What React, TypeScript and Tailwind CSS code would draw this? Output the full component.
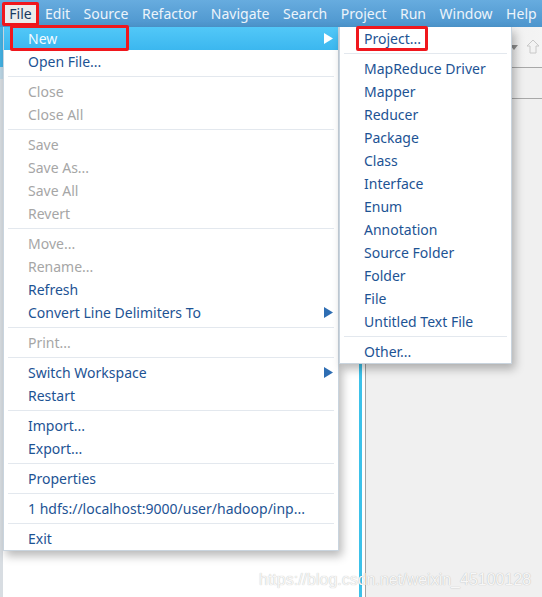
import * as React from "react"

type Item =
  | { kind: "sep" }
  | { kind: "item"; label: string; disabled?: boolean; submenu?: boolean; active?: boolean }

const FONT = { fontFamily: '"Noto Sans", "Open Sans", sans-serif' }

const MENU_BAR = ["Edit", "Source", "Refactor", "Navigate", "Search", "Project", "Run", "Window", "Help"]

const sep: Item = { kind: "sep" }
const it = (label: string, extra: Partial<Extract<Item, { kind: "item" }>> = {}): Item => ({
  kind: "item",
  label,
  ...extra,
})

const FILE_MENU: Item[] = [
  it("New", { submenu: true, active: true }),
  it("Open File..."),
  sep,
  it("Close", { disabled: true }),
  it("Close All", { disabled: true }),
  sep,
  it("Save", { disabled: true }),
  it("Save As...", { disabled: true }),
  it("Save All", { disabled: true }),
  it("Revert", { disabled: true }),
  sep,
  it("Move...", { disabled: true }),
  it("Rename...", { disabled: true }),
  it("Refresh"),
  it("Convert Line Delimiters To", { submenu: true }),
  sep,
  it("Print...", { disabled: true }),
  sep,
  it("Switch Workspace", { submenu: true }),
  it("Restart"),
  sep,
  it("Import..."),
  it("Export..."),
  sep,
  it("Properties"),
  sep,
  it("1 hdfs://localhost:9000/user/hadoop/inp..."),
  sep,
  it("Exit"),
]

const NEW_MENU: Item[] = [
  it("Project..."),
  sep,
  it("MapReduce Driver"),
  it("Mapper"),
  it("Reducer"),
  it("Package"),
  it("Class"),
  it("Interface"),
  it("Enum"),
  it("Annotation"),
  it("Source Folder"),
  it("Folder"),
  it("File"),
  it("Untitled Text File"),
  sep,
  it("Other..."),
]

function Arrow({ color }: { color: string }) {
  return (
    <svg width="9" height="11" viewBox="0 0 9 11" className="absolute right-[5px] top-[6px]">
      <path d="M0 0 L9 5.5 L0 11 Z" fill={color} />
    </svg>
  )
}

function MenuList({ items, textLeft }: { items: Item[]; textLeft: number }) {
  return (
    <div className="flex flex-col">
      {items.map((item, i) => {
        if (item.kind === "sep") {
          return (
            <div key={i} className="flex h-[7px] items-center px-[4px]">
              <div className="h-px w-full bg-[#e3e8ee]" />
            </div>
          )
        }
        return (
          <div
            key={i}
            className={`relative flex h-[23px] items-center text-[14px] ${
              item.active
                ? "bg-gradient-to-b from-[#52c8f8] to-[#3bb7ef] text-[#f4fbff]"
                : item.disabled
                  ? "text-[#a6a6a6]"
                  : "text-[#1d5394]"
            }`}
            style={{ paddingLeft: textLeft }}
          >
            <span className="whitespace-nowrap leading-none">{item.label}</span>
            {item.submenu ? <Arrow color={item.active ? "#ffffff" : "#2f6eb3"} /> : null}
          </div>
        )
      })}
    </div>
  )
}

export default function App() {
  return (
    <div className="relative flex h-[597px] w-[542px] flex-col overflow-hidden bg-white" style={FONT}>
      {/* Menu bar */}
      <div className="flex h-[27px] items-center bg-gradient-to-b from-[#67acdf] to-[#4c95cd] pl-[2px] text-[14px] text-[#edf4fb]">
        <div className="flex h-[24px] w-[37px] items-center justify-center rounded-[2px] border-[3px] border-[#f0171d] bg-[#ececec] text-[#173a62]">
          File
        </div>
        <div className="flex items-center gap-[13.5px] pl-[6px]">
          {MENU_BAR.map((m) => (
            <span key={m} className="whitespace-nowrap">
              {m}
            </span>
          ))}
        </div>
      </div>

      {/* Workbench behind the menus */}
      <div className="flex flex-1">
        <div className="flex w-[3px] flex-col bg-[#d8dde2]">
          <div className="h-[40px] bg-[#44b2e4]" />
          <div className="h-[12px] bg-[#bcd7e6]" />
        </div>
        <div className="w-[356px] bg-white" />
        <div className="w-[3px] bg-[#3cc1e9]" />
        <div className="w-[3px] bg-white" />
        <div className="w-px bg-[#a3a3a3]" />
        <div className="flex flex-1 flex-col bg-[#f0f0f0]">
          <div className="flex h-[40px] items-center justify-end gap-[8px] bg-gradient-to-r from-[#e4e4e4] to-[#f4f4f4] pr-[2px]">
            <svg width="8" height="5" viewBox="0 0 8 5">
              <path d="M0 0 H8 L4 5 Z" fill="#8d8d8d" />
            </svg>
            <svg width="14" height="18" viewBox="0 0 14 18">
              <path d="M7 2 L13 8 H10 V15 H4 V8 H1 Z" fill="none" stroke="#c8c8c8" strokeWidth="1" />
            </svg>
          </div>
          <div className="h-px bg-[#a8a8a8]" />
          <div className="h-[30px]" />
          <div className="h-px bg-[#a8a8a8]" />
        </div>
      </div>

      {/* File menu */}
      <div className="absolute left-[3px] top-[27px] w-[336px] border border-t-0 border-[#c9d4de] bg-white shadow-[3px_5px_9px_rgba(0,0,0,0.28)]">
        <MenuList items={FILE_MENU} textLeft={24} />
      </div>

      {/* New submenu */}
      <div className="absolute left-[339px] top-[27px] w-[173px] border border-t-0 border-[#c9d4de] bg-white shadow-[3px_5px_9px_rgba(0,0,0,0.28)]">
        <MenuList items={NEW_MENU} textLeft={24} />
      </div>

      {/* Highlight boxes */}
      <div className="absolute left-[10px] top-[25px] h-[26px] w-[119px] rounded-[2px] border-[3px] border-[#f0171d]" />
      <div className="absolute left-[356px] top-[26px] h-[25px] w-[72px] rounded-[2px] border-[3px] border-[#f0171d]" />

      {/* Watermark */}
      <div
        className="absolute left-[259px] top-[568px] whitespace-nowrap text-[16px] text-[#f7f7f7]"
        style={{ fontFamily: '"Liberation Sans", Arial, sans-serif', textShadow: "0 0 1px rgba(0,0,0,0.3)" }}
      >
        https://blog.csdn.net/weixin_45100128
      </div>
    </div>
  )
}
